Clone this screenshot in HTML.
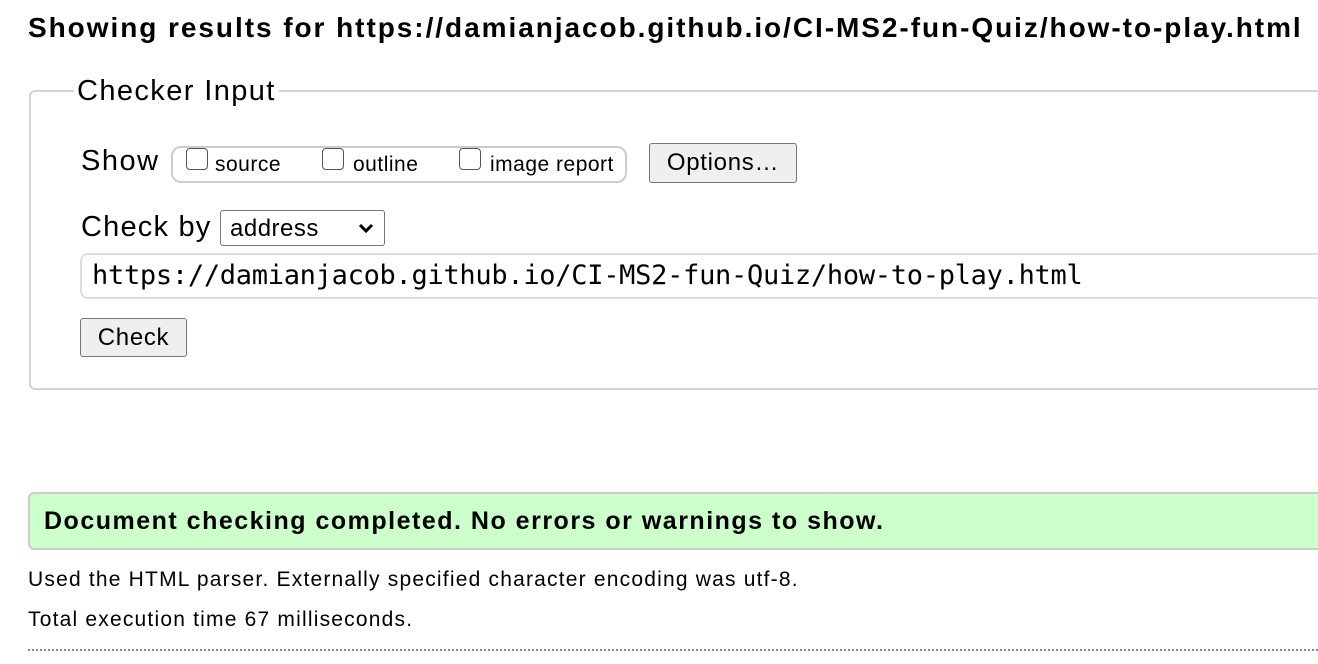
<!DOCTYPE html>
<html><head><meta charset="utf-8"><style>
body{margin:0;width:1318px;height:664px;overflow:hidden;background:#fff;font-family:"Liberation Sans",Arial,sans-serif;color:#000;position:relative}
.a{position:absolute;white-space:nowrap}
.btn{position:absolute;background:#efefef;border:1px solid #767676;border-radius:3px;box-sizing:border-box;display:flex;align-items:center;justify-content:center;font-size:24px;letter-spacing:0.7px}
.cb{position:absolute;width:22px;height:22px;border:1.5px solid #555;border-radius:4px;box-sizing:border-box;background:#fff}
.l{font-size:21px;letter-spacing:0.5px}
</style></head><body>
<div class="a" style="left:28px;top:12px;font-size:28px;font-weight:bold;letter-spacing:1.95px">Showing results for https://damianjacob.github.io/CI-MS2-fun-Quiz/how-to-play.html</div>
<div class="a" style="left:29px;top:90px;width:1320px;height:300px;border:2px solid #d4d4d4;border-radius:6px;box-sizing:border-box"></div>
<div class="a" style="left:74px;top:75px;font-size:29px;background:#fff;padding:0 3px;letter-spacing:1.4px">Checker Input</div>
<div class="a" style="left:81px;top:145px;font-size:29px;letter-spacing:1.5px">Show</div>
<div class="a" style="left:171px;top:146px;width:456px;height:37px;border:2px solid #ccc;border-radius:10px;box-sizing:border-box"></div>
<div class="cb" style="left:186px;top:148px"></div><div class="a l" style="left:215px;top:153px">source</div>
<div class="cb" style="left:322px;top:148px"></div><div class="a l" style="left:353px;top:153px">outline</div>
<div class="cb" style="left:459px;top:148px"></div><div class="a l" style="left:490px;top:153px">image report</div>
<div class="btn" style="left:649px;top:143px;width:148px;height:40px">Options…</div>
<div class="a" style="left:81px;top:211px;font-size:29px;letter-spacing:1.2px">Check by</div>
<div class="a" style="left:220px;top:210px;width:165px;height:36px;border:1px solid #767676;border-radius:3px;box-sizing:border-box;font-size:24px;padding:4px 0 0 9px;letter-spacing:0.5px">address
<svg style="position:absolute;right:10px;top:12px" width="16" height="11" viewBox="0 0 16 11"><path d="M2 2 L8 8 L14 2" fill="none" stroke="#000" stroke-width="3"/></svg></div>
<div class="a" style="left:80px;top:253px;width:1260px;height:46px;border:2px solid #ddd;border-radius:8px;box-sizing:border-box"></div>
<div class="a" style="left:92px;top:260px;font-size:27px;font-family:'DejaVu Sans Mono','Liberation Mono',monospace;letter-spacing:-0.28px">https://damianjacob.github.io/CI-MS2-fun-Quiz/how-to-play.html</div>
<div class="btn" style="left:80px;top:318px;width:107px;height:39px">Check</div>
<div class="a" style="left:28px;top:492px;width:1310px;height:58px;background:#ccffcc;border:2px solid #ccc;border-radius:6px;box-sizing:border-box"></div>
<div class="a" style="left:44px;top:507px;font-size:25px;font-weight:bold;letter-spacing:1.5px">Document checking completed. No errors or warnings to show.</div>
<div class="a" style="left:28px;top:568px;font-size:21px;letter-spacing:1.2px">Used the HTML parser. Externally specified character encoding was utf-8.</div>
<div class="a" style="left:28px;top:608px;font-size:21px;letter-spacing:1.2px">Total execution time 67 milliseconds.</div>
<div class="a" style="left:28px;top:649px;width:1290px;border-top:2px dotted #888"></div>
</body></html>
